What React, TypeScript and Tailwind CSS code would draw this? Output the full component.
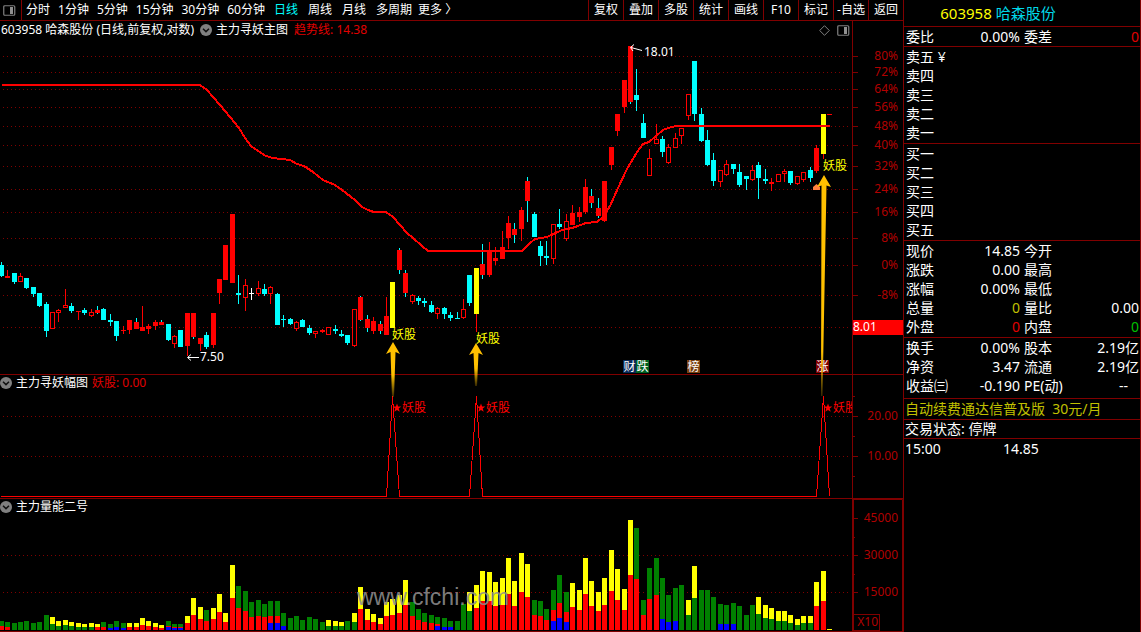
import type { ReactNode } from "react";

type CandleKind = "r" | "m" | "h" | "c" | "y" | "w";
type Candle = [CandleKind, number, number, number, number];
type VolumeBar = [top: "y" | "g", height: number, base?: "r" | "g" | "b", baseHeight?: number, blue?: number];

// kind, high, body top, body bottom, low
// r: up, m: up with cyan wick, h: hollow, c: down, y: signal, w: flat
const candles: Candle[] = [
  ["c", 262, 265, 276, 277], ["r", 270, 276, 278, 278], ["c", 273, 273, 282, 284], ["h", 273, 276, 282, 282],
  ["c", 278, 278, 288, 289], ["c", 287, 287, 294, 297], ["c", 293, 293, 306, 307], ["c", 302, 304, 331, 337],
  ["h", 312, 312, 329, 329], ["h", 309, 310, 313, 322], ["h", 289, 305, 308, 308], ["c", 303, 306, 311, 313],
  ["r", 311, 311, 312, 320], ["c", 308, 310, 313, 315], ["h", 309, 312, 316, 317], ["m", 306, 310, 313, 314],
  ["c", 308, 309, 320, 320], ["c", 314, 320, 322, 326], ["c", 321, 321, 336, 341], ["r", 326, 330, 331, 334],
  ["r", 320, 320, 330, 334], ["m", 318, 322, 329, 329], ["r", 306, 327, 331, 331], ["r", 324, 326, 329, 334],
  ["r", 320, 322, 326, 330], ["m", 320, 322, 325, 325], ["c", 324, 324, 340, 341], ["h", 335, 336, 344, 348],
  ["c", 330, 330, 347, 347], ["r", 313, 313, 346, 356], ["m", 313, 313, 337, 339], ["r", 338, 338, 344, 351],
  ["c", 332, 335, 347, 349], ["r", 313, 313, 345, 348], ["r", 279, 279, 293, 304], ["r", 245, 245, 280, 280],
  ["r", 214, 214, 283, 283], ["c", 275, 293, 295, 304], ["h", 279, 285, 298, 311], ["w", 288, 293, 294, 300],
  ["h", 281, 288, 294, 296], ["c", 284, 289, 294, 296], ["h", 286, 287, 294, 304], ["c", 293, 294, 325, 325],
  ["c", 315, 319, 320, 327], ["c", 318, 319, 324, 325], ["h", 321, 322, 329, 331], ["c", 319, 320, 327, 327],
  ["c", 325, 328, 333, 335], ["h", 331, 331, 334, 338], ["r", 329, 330, 332, 333], ["h", 327, 327, 335, 335],
  ["c", 325, 329, 331, 334], ["c", 330, 334, 336, 337], ["c", 335, 335, 343, 345], ["h", 309, 309, 346, 347],
  ["m", 296, 297, 320, 321], ["m", 315, 319, 328, 332], ["r", 317, 321, 331, 334], ["m", 321, 324, 331, 334],
  ["r", 297, 316, 335, 335], ["y", 282, 282, 328, 328], ["m", 248, 250, 270, 274], ["m", 270, 273, 293, 297],
  ["h", 294, 295, 302, 304], ["c", 296, 298, 301, 305], ["c", 298, 301, 303, 307], ["c", 301, 305, 312, 313],
  ["h", 307, 308, 314, 319], ["c", 307, 308, 314, 319], ["c", 312, 315, 318, 321], ["c", 312, 318, 319, 319],
  ["h", 299, 309, 318, 319], ["c", 275, 275, 303, 306], ["y", 268, 268, 314, 332], ["m", 244, 264, 275, 279],
  ["r", 242, 251, 275, 277], ["r", 247, 258, 261, 265], ["r", 231, 247, 259, 259], ["r", 216, 223, 238, 249],
  ["m", 223, 229, 235, 243], ["r", 207, 210, 229, 241], ["m", 177, 181, 201, 222], ["c", 212, 214, 237, 237],
  ["c", 241, 246, 256, 266], ["c", 241, 256, 258, 265], ["h", 224, 224, 259, 264], ["c", 209, 224, 227, 229],
  ["h", 214, 221, 239, 241], ["r", 205, 213, 225, 225], ["r", 207, 212, 217, 222], ["r", 179, 187, 212, 214],
  ["m", 189, 196, 203, 208], ["m", 198, 208, 216, 218], ["r", 181, 181, 221, 222], ["r", 147, 147, 165, 170],
  ["r", 114, 114, 131, 136], ["r", 80, 80, 107, 113], ["m", 46, 46, 102, 104], ["c", 69, 95, 100, 111],
  ["c", 114, 123, 138, 138], ["h", 149, 158, 176, 176], ["h", 124, 139, 144, 144], ["c", 136, 139, 152, 157],
  ["h", 144, 147, 163, 164], ["h", 133, 138, 148, 148], ["h", 128, 128, 136, 144], ["h", 94, 94, 116, 120],
  ["c", 61, 61, 114, 121], ["c", 108, 114, 141, 142], ["c", 130, 140, 165, 166], ["c", 153, 160, 181, 186],
  ["h", 170, 170, 182, 187], ["h", 160, 164, 175, 176], ["c", 164, 164, 169, 174], ["c", 164, 172, 185, 187],
  ["c", 176, 176, 179, 190], ["h", 165, 170, 180, 181], ["c", 162, 165, 178, 199], ["c", 169, 179, 181, 184],
  ["r", 178, 182, 184, 191], ["h", 174, 174, 182, 182], ["h", 169, 171, 174, 182], ["c", 171, 171, 183, 185],
  ["h", 176, 176, 184, 185], ["h", 172, 172, 180, 182], ["c", 167, 170, 178, 182], ["r", 145, 148, 171, 173],
  ["y", 114, 114, 154, 159], ["r", 114, 114, 115, 115],
];

const volumes: VolumeBar[] = [
  ["g", 9, "r", 4], ["g", 8, "r", 3], ["g", 7], ["g", 8], ["g", 9], ["g", 7], ["g", 8], ["g", 15],
  ["y", 13, "g", 6], ["y", 9, "g", 4], ["y", 10, "g", 5], ["y", 8, "g", 4], ["y", 7, "g", 3], ["y", 6, "g", 3],
  ["y", 7, "g", 3], ["y", 6, "r", 3], ["g", 8, "r", 3], ["g", 6, "b", 2], ["g", 9, "b", 3], ["g", 7, "b", 2],
  ["y", 7, "r", 3], ["y", 7, "r", 3], ["y", 12, "r", 5], ["y", 9, "r", 4], ["y", 7, "r", 3], ["y", 5, "r", 2],
  ["g", 9, "r", 4, 3], ["g", 6, "r", 3, 2], ["g", 6, "r", 3, 2], ["y", 14, "r", 7], ["y", 32, "r", 15],
  ["y", 23, "r", 11], ["g", 20, "r", 9], ["y", 22, "r", 11], ["y", 36, "r", 18], ["y", 17, "r", 8],
  ["y", 65, "r", 32], ["g", 44, "r", 22], ["g", 39, "r", 19], ["g", 28, "r", 13], ["g", 30, "r", 14],
  ["g", 26, "r", 13], ["g", 29, "r", 14, 7], ["g", 29, "r", 14, 7], ["g", 17, "b", 4], ["g", 12], ["g", 14],
  ["g", 10], ["g", 13], ["g", 11], ["g", 8], ["y", 10, "g", 4], ["y", 9, "g", 4], ["y", 8, "g", 4], ["g", 9],
  ["y", 17, "g", 8], ["y", 43, "r", 21], ["y", 21, "r", 10], ["y", 16, "r", 8], ["y", 12, "r", 6],
  ["y", 28, "r", 14], ["y", 31, "r", 15], ["y", 35, "r", 17], ["y", 50, "r", 25], ["g", 28, "r", 14],
  ["g", 21, "r", 10], ["g", 17, "r", 8], ["g", 15, "r", 7], ["g", 13, "r", 6, 4], ["g", 12, "b", 3],
  ["g", 9, "b", 3], ["g", 9], ["g", 26], ["y", 38, "g", 19], ["y", 45, "r", 22], ["y", 59, "r", 29],
  ["y", 58, "r", 29], ["y", 48, "r", 24], ["y", 52, "r", 25], ["y", 72, "r", 36], ["y", 49, "r", 24],
  ["y", 77, "r", 38], ["y", 66, "r", 33], ["g", 30, "r", 15], ["g", 29, "r", 14], ["g", 21, "r", 10],
  ["g", 40, "r", 20, 9], ["g", 55, "r", 27, 12], ["g", 38, "r", 18, 8], ["y", 47, "r", 23], ["y", 40, "r", 20],
  ["y", 72, "r", 36], ["y", 49, "r", 24], ["y", 38, "r", 19], ["y", 52, "r", 25], ["y", 80, "r", 39],
  ["y", 61, "r", 30], ["y", 41, "r", 20], ["y", 110, "r", 55], ["g", 102, "r", 51], ["g", 30, "r", 15],
  ["g", 62, "r", 31], ["g", 72, "r", 35], ["g", 52, "b", 11], ["g", 35, "b", 8], ["g", 42, "b", 9], ["g", 45],
  ["y", 30, "g", 15], ["y", 64, "g", 32], ["g", 40], ["g", 40], ["g", 33], ["g", 26, "b", 6], ["g", 25, "b", 6],
  ["g", 27, "b", 6], ["g", 24], ["g", 15], ["g", 25], ["y", 33, "g", 16], ["y", 25, "g", 12], ["y", 22, "g", 11],
  ["y", 19, "g", 9], ["y", 19, "g", 9], ["y", 15, "g", 7], ["y", 11, "g", 5], ["y", 14, "g", 7], ["y", 14, "g", 7],
  ["y", 48, "r", 24], ["y", 59, "r", 29], ["y", 1],
];

const bodyColor = { r: "#f00", m: "#f00", h: "#f00", c: "#0ff", y: "#ff0", w: "#fff" };
const wickColor = { r: "#f00", m: "#0ff", h: "#f00", c: "#0ff", y: "#f00", w: "#fff" };
const volumeColor = { y: "#ff0", g: "#008000", r: "#f00", b: "#00f" };

const trend =
  "2,85 200,85 207,90 213,97 220,105 230,117 239,128 245,138 251,146 258,151 266,156 273,158 290,160 297,164 304,166 313,172 323,180 335,185 342,190 355,200 362,207 368,210 374,212 386,212 393,217 407,233 413,238 422,246 428,251 522,251 530,243 535,239 547,237 562,230 572,228 578,226 586,223 597,222 603,217 610,206 618,188 627,169 637,152 643,144 649,142 656,136 663,130 668,128 676,126 830,126";

const priceTicks: [number, string][] = [
  [56, "80%"], [72, "72%"], [89, "64%"], [107, "56%"], [126, "48%"], [145, "40%"], [166, "32%"],
  [189, "24%"], [212, "16%"], [238, "8%"], [265, "0%"], [295, "-8%"], [327, ""],
];

const minutePeriods = ["分时", "1分钟", "5分钟", "15分钟", "30分钟", "60分钟"];
const dayPeriods = ["日线", "周线", "月线", "多周期"];
const tools = ["复权", "叠加", "多股", "统计", "画线", "F10", "标记", "-自选", "返回"];

const barX = (i: number) => Math.floor(6.421 * i - 0.8);

function GridLines({ ys }: { ys: number[] }) {
  return (
    <g stroke="#800000" strokeDasharray="1 3" shapeRendering="crispEdges">
      {ys.map((y) => (
        <line key={y} x1={3} x2={849} y1={y + 0.5} y2={y + 0.5} />
      ))}
    </g>
  );
}

function Candles() {
  return (
    <g shapeRendering="crispEdges">
      {candles.map(([kind, high, top, bottom, low], i) => {
        const x = barX(i);
        return (
          <g key={i}>
            {high < top && <rect x={x + 2} y={high} width={1} height={top - high} fill={wickColor[kind]} />}
            {low > bottom && <rect x={x + 2} y={bottom} width={1} height={low - bottom} fill={wickColor[kind]} />}
            {kind === "h" ? (
              <rect x={x + 0.5} y={top + 0.5} width={4} height={bottom - top - 1} fill="#000" stroke="#f00" />
            ) : (
              <rect x={x} y={top} width={5} height={bottom - top} fill={bodyColor[kind]} />
            )}
          </g>
        );
      })}
    </g>
  );
}

function Badge({ x, fill, children }: { x: number; fill: string; children: ReactNode }) {
  return (
    <g>
      <rect x={x} y={360} width={13} height={13} fill={fill} />
      <text x={x + 0.5} y={371} fill="#fff">{children}</text>
    </g>
  );
}

function SignalPeak({ x }: { x: number }) {
  return (
    <g fill="#f00">
      <path
        transform={`translate(${x + 5} 408)`}
        d="M0-4.5 1.1-1.4 4.3-1.4 1.7.6 2.7 3.8 0 1.9-2.7 3.8-1.7.6-4.3-1.4-1.1-1.4Z"
      />
      <text x={x + 10} y={412}>妖股</text>
    </g>
  );
}

function Axis({ top, height, children }: { top: number; height: number; children: ReactNode }) {
  return (
    <svg
      viewBox={`853 ${top} 50 ${height}`}
      width={50}
      height={height}
      className="block text-[12px]"
      fill="#b00000"
      textAnchor="end"
    >
      {children}
    </svg>
  );
}

function Tick({ y, label, minor }: { y: number; label?: string; minor?: boolean }) {
  return (
    <>
      <rect x={853} y={y} width={minor ? 2 : 5} height={1} fill="#800000" />
      {label && <text x={898} y={y + 4}>{label}</text>}
    </>
  );
}

function PanelIcon() {
  return (
    <svg width="13" height="11" viewBox="0 0 13 11" className="block">
      <rect x="0.75" y="0.75" width="11" height="9.5" rx="1" fill="none" stroke="#808080" strokeWidth="1.2" />
      <rect x="7" y="2" width="3" height="7" fill="#909090" />
    </svg>
  );
}

function IndicatorButton({ name }: { name: string }) {
  return (
    <button type="button" className="flex items-center gap-1">
      <svg width="12" height="12" viewBox="0 0 12 12">
        <circle cx="6" cy="6" r="6" fill="#808080" />
        <path d="M3 4.8 6 7.6 9 4.8" fill="none" stroke="#111" strokeWidth="1.5" />
      </svg>
      <span>{name}</span>
    </button>
  );
}

function Toolbar() {
  return (
    <header className="flex h-[21px] items-stretch border-b border-[#800000]">
      <button type="button" aria-label="侧栏" className="flex w-[22px] items-center border-r border-[#800000] pl-[3px]">
        <PanelIcon />
      </button>
      <nav className="flex items-center gap-2 pl-1 whitespace-nowrap">
        {minutePeriods.map((p) => (
          <button key={p} type="button">{p}</button>
        ))}
      </nav>
      <nav className="flex items-center gap-[10px] pl-[9px] whitespace-nowrap">
        {dayPeriods.map((p) => (
          <button key={p} type="button" className={p === "日线" ? "text-[#00ffff]" : ""}>{p}</button>
        ))}
      </nav>
      <button type="button" className="pl-1.5 whitespace-nowrap">更多 〉</button>
      <div className="ml-auto flex">
        {tools.map((t) => (
          <button key={t} type="button" className="w-[35px] border-l border-[#800000] whitespace-nowrap">{t}</button>
        ))}
      </div>
    </header>
  );
}

function PricePane() {
  return (
    <section className="relative z-10 flex border-b border-[#800000]">
      <div className="min-w-0 flex-1">
        <div className="flex h-[18px] items-center pl-px whitespace-nowrap">
          <h1>603958 哈森股份 (日线,前复权,对数)</h1>
          <div className="ml-1.5 flex">
            <IndicatorButton name="主力寻妖主图" />
          </div>
          <span className="ml-1.5 text-[#e00000]">趋势线: 14.38</span>
          <div className="ml-auto flex items-center gap-[7px] pr-0.5">
            <svg width="11" height="11" viewBox="0 0 11 11">
              <path d="M5.5.7 10.3 5.5 5.5 10.3.7 5.5Z" fill="none" stroke="#808080" />
            </svg>
            <PanelIcon />
          </div>
        </div>
        <svg
          viewBox="0 39 852 335"
          height={335}
          preserveAspectRatio="xMinYMin meet"
          className="block w-full overflow-visible text-[12px]"
        >
          <defs>
            <linearGradient id="arrow" x1="0" y1="0" x2="0" y2="1">
              <stop offset="0.6" stopColor="#ffc000" />
              <stop offset="1" stopColor="#ffc000" stopOpacity="0.2" />
            </linearGradient>
            <linearGradient id="arrowLong" x1="0" y1="0" x2="0" y2="1">
              <stop offset="0.8" stopColor="#ffc000" />
              <stop offset="1" stopColor="#ffc000" stopOpacity="0.2" />
            </linearGradient>
          </defs>
          <GridLines ys={priceTicks.map(([y]) => y)} />
          <Candles />
          <polyline points={trend} fill="none" stroke="#f00" strokeWidth={2} shapeRendering="crispEdges" />
          <g stroke="#fff" fill="none">
            <path d="M642 50.5 631 47.5M634 44.5 630.5 47.5 633 51" />
            <path d="M199 357.5H188M191 354.5 187.5 357.5 191 360.5" />
          </g>
          <g fill="#fff">
            <text x={644} y={56}>18.01</text>
            <text x={200} y={361}>7.50</text>
          </g>
          <path d="M813 190V187L816.5 184 820 187V190Z" fill="#ff8040" />
          <Badge x={623} fill="#0a2a5a">财</Badge>
          <Badge x={636} fill="#006020">跌</Badge>
          <Badge x={687} fill="#7a4010">榜</Badge>
          <Badge x={816} fill="#800000">涨</Badge>
          <path d="M393 342 400 354 395.5 352 394 397H392L390.5 352 386 354Z" fill="url(#arrow)" />
          <path d="M476 343 483 355 478.5 353 477 386H475L473.5 353 469 355Z" fill="url(#arrow)" />
          <path d="M824 175 831 187 826.5 185.5 822.5 396H821L821.5 185.5 817 187Z" fill="url(#arrowLong)" />
          <g fill="#ff0">
            <text x={392} y={339}>妖股</text>
            <text x={476} y={343}>妖股</text>
            <text x={823} y={170}>妖股</text>
          </g>
        </svg>
      </div>
      <div className="border-l border-[#800000]">
        <Axis top={21} height={353}>
          {priceTicks.map(([y, label]) => (
            <Tick key={y} y={y} label={label} />
          ))}
          <rect x={853} y={320} width={50} height={15} fill="#f00" />
          <text x={853} y={331} fill="#fff" textAnchor="start">8.01</text>
        </Axis>
      </div>
    </section>
  );
}

function SignalPane() {
  return (
    <section className="flex border-b border-[#800000]">
      <div className="min-w-0 flex-1">
        <div className="flex h-4 items-center gap-1 whitespace-nowrap">
          <IndicatorButton name="主力寻妖幅图" />
          <span className="text-[#e00000]">妖股: 0.00</span>
        </div>
        <svg
          viewBox="0 391 852 107"
          height={107}
          preserveAspectRatio="xMinYMin meet"
          className="block w-full text-[12px]"
        >
          <GridLines ys={[416, 456]} />
          <polyline
            points="1,496.5 386.5,496.5 392.5,396.5 399.5,496.5 469.5,496.5 476.5,396.5 482.5,496.5 816.5,496.5 823.5,396.5 829.5,496.5"
            fill="none"
            stroke="#f00"
            shapeRendering="crispEdges"
          />
          <SignalPeak x={392} />
          <SignalPeak x={476} />
          <SignalPeak x={823} />
        </svg>
      </div>
      <div className="border-l border-[#800000]">
        <Axis top={375} height={123}>
          <Tick y={396} minor />
          <Tick y={416} label="20.00" />
          <Tick y={436} minor />
          <Tick y={456} label="10.00" />
          <Tick y={476} minor />
        </Axis>
      </div>
    </section>
  );
}

function VolumePane() {
  return (
    <section className="flex border-b border-[#800000]">
      <div className="min-w-0 flex-1">
        <div className="flex h-4 items-center whitespace-nowrap">
          <IndicatorButton name="主力量能二号" />
        </div>
        <svg
          viewBox="0 515 852 116"
          height={116}
          preserveAspectRatio="xMinYMin meet"
          className="block w-full"
        >
          <GridLines ys={[555, 592]} />
          <g shapeRendering="crispEdges">
            {volumes.map(([top, height, base, baseHeight = 0, blue = 0], i) => (
              <g key={i}>
                <rect x={barX(i)} y={630 - height} width={5} height={height} fill={volumeColor[top]} />
                {base && (
                  <rect x={barX(i)} y={630 - baseHeight} width={5} height={baseHeight} fill={volumeColor[base]} />
                )}
                {blue > 0 && <rect x={barX(i)} y={630 - blue} width={5} height={blue} fill="#00f" />}
              </g>
            ))}
          </g>
          <text
            x={357}
            y={605}
            fill="#8c8c8c"
            fillOpacity={0.9}
            className="font-['Liberation_Sans',sans-serif] text-[23px]"
          >
            www.cfchi.com
          </text>
        </svg>
      </div>
      <div className="border-l border-[#800000]">
        <Axis top={499} height={132}>
          <path d="M853.5 499V631M853 499.5H902.5V631" fill="none" stroke="#800000" />
          <Tick y={518} label="45000" />
          <Tick y={537} minor />
          <Tick y={555} label="30000" />
          <Tick y={574} minor />
          <Tick y={592} label="15000" />
          <rect x={853.5} y={614.5} width={26} height={16} fill="none" stroke="#800000" />
          <text x={878} y={626}>X10</text>
        </Axis>
      </div>
    </section>
  );
}

type Row = [string, string, string, string, string?, string?];

const quoteRows: Row[] = [
  ["现价", "14.85", "今开", ""],
  ["涨跌", "0.00", "最高", ""],
  ["涨幅", "0.00%", "最低", ""],
  ["总量", "0", "量比", "0.00", "text-[#c0c000]"],
  ["外盘", "0", "内盘", "0", "text-[#e00000]", "text-[#00c000]"],
];

const statRows: Row[] = [
  ["换手", "0.00%", "股本", "2.19亿"],
  ["净资", "3.47", "流通", "2.19亿"],
  ["收益㈢", "-0.190", "PE(动)", "--"],
];

function QuoteTable({ rows }: { rows: Row[] }) {
  return (
    <table className="w-full table-fixed border-collapse">
      <tbody>
        {rows.map(([label, value, label2, value2, color = "", color2 = ""]) => (
          <tr key={label} className="h-[19px]">
            <th scope="row" className="w-11 p-0 pl-0.5 text-left font-normal">{label}</th>
            <td className={`p-0 pr-0.5 text-right ${color}`}>{value}</td>
            <th scope="row" className="w-11 p-0 pl-0.5 text-left font-normal">{label2}</th>
            <td className={`p-0 text-right ${value2 === "--" ? "pr-3" : "pr-px"} ${color2}`}>{value2}</td>
          </tr>
        ))}
      </tbody>
    </table>
  );
}

function OrderLevels({ levels }: { levels: string[] }) {
  return (
    <ul className="border-b border-[#800000] pb-px pl-0.5">
      {levels.map((level) => (
        <li key={level} className="h-[19px]">{level}</li>
      ))}
    </ul>
  );
}

function QuotePanel() {
  return (
    <aside className="w-[238px] shrink-0 border-x border-[#800000] text-[14px] leading-[19px] whitespace-nowrap">
      <h2 className="flex h-[27px] items-center justify-center gap-1 border-b border-[#800000] pr-12 text-[15px]">
        <span className="text-[#ffff00]">603958</span>
        <span className="text-[#00d8e8]">哈森股份</span>
      </h2>
      <div className="border-b border-[#800000]">
        <QuoteTable rows={[["委比", "0.00%", "委差", "0", "", "text-[#e00000]"]]} />
      </div>
      <OrderLevels levels={["卖五 ¥", "卖四", "卖三", "卖二", "卖一"]} />
      <OrderLevels levels={["买一", "买二", "买三", "买四", "买五"]} />
      <div className="border-b border-[#800000] pb-px">
        <QuoteTable rows={quoteRows} />
      </div>
      <div className="border-b border-[#800000] pb-[3px]">
        <QuoteTable rows={statRows} />
      </div>
      <a href="#renew" className="block h-[21px] border-b border-[#800000] pl-px text-[#c0c000]">
        自动续费通达信普及版&nbsp; 30元/月
      </a>
      <p className="h-[19px] border-b border-[#800000] pl-px leading-[18px]">交易状态: 停牌</p>
      <table className="border-collapse">
        <tbody>
          <tr>
            <td className="w-[99px] p-0 pl-px">15:00</td>
            <td className="p-0">14.85</td>
          </tr>
        </tbody>
      </table>
    </aside>
  );
}

export default function App() {
  return (
    <div className="flex min-h-screen bg-black font-['Noto_Sans','Noto_Sans_CJK_SC',sans-serif] text-[12px] leading-4 text-white">
      <main className="min-w-0 flex-1">
        <Toolbar />
        <PricePane />
        <SignalPane />
        <VolumePane />
      </main>
      <QuotePanel />
    </div>
  );
}
